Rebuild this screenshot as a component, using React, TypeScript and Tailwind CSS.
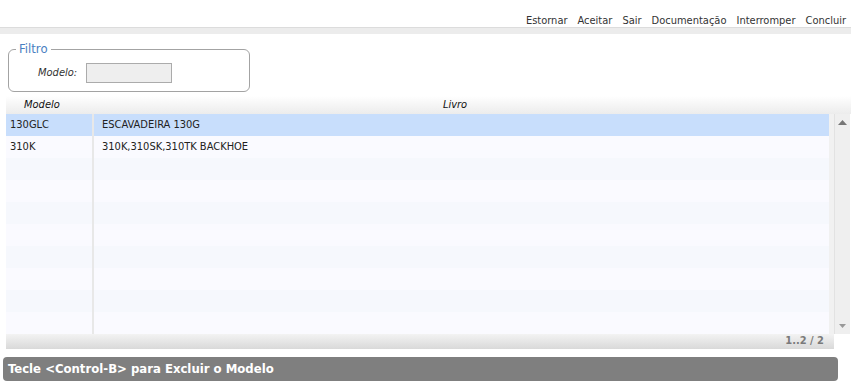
const rows = [
  { modelo: "130GLC", livro: "ESCAVADEIRA 130G" },
  { modelo: "310K", livro: "310K,310SK,310TK BACKHOE" },
];

const font = "font-['Tahoma','DejaVu_Sans_Condensed','DejaVu_Sans',sans-serif]";

export default function App() {
  const filler = Array.from({ length: 10 }, (_, i) => rows[i] ?? null);

  return (
    <div className={`w-[851px] h-[389px] bg-white text-[11px] text-[#222] overflow-hidden ${font}`}>
      {/* toolbar */}
      <div className="h-[27px] flex items-end justify-end gap-[10px] pr-[5px] text-[#333]">
        {["Estornar", "Aceitar", "Sair", "Documentação", "Interromper", "Concluir"].map((a) => (
          <span key={a} className="leading-[13px]">{a}</span>
        ))}
      </div>
      <div className="h-[7px] border-t border-[#dcdcdc] bg-[#ececec]" />

      {/* filtro */}
      <div className="pl-[8px] pt-[8px]">
        <fieldset className="w-[242px] h-[50px] border border-[#a3a3a3] rounded-[6px] pl-[7px]">
          <legend className="px-[3px] text-[13px] text-[#4a7fc2] leading-[14px]">Filtro</legend>
          <div className="flex items-center gap-[9px] pl-[22px] pt-[7px]">
            <span className="italic text-[#333]">Modelo:</span>
            <div className="w-[86px] h-[20px] bg-[#eeeeee] border border-[#ababab]" />
          </div>
        </fieldset>
      </div>

      {/* grid */}
      <div className="ml-[6px] mt-[4px] w-[845px]">
        <div className="h-[18px] flex items-center bg-gradient-to-b from-white to-[#ececec] italic text-[#111]">
          <div className="w-[87px] pl-[18px]">Modelo</div>
          <div className="flex-1 text-center pr-[34px]">Livro</div>
        </div>
        <div className="flex">
          <div className="w-[823px]">
            {filler.map((r, i) => (
              <div
                key={i}
                className={`h-[22px] flex items-center ${
                  i === 0 ? "bg-[#c8defc]" : i % 2 === 1 ? "bg-[#fafaff]" : "bg-[#f6f8fd]"
                }`}
              >
                <div className="w-[86px] pl-[4px] h-full flex items-center">{r?.modelo}</div>
                <div className="w-[2px] h-full bg-[#e8e8e8]" />
                <div className="pl-[8px]">{r?.livro}</div>
              </div>
            ))}
          </div>
          <div className="w-[5px] bg-[#f1f1f1]" />
          <div className="w-[16px] bg-[#efefef] border-l border-[#e2e2e2] flex flex-col justify-between items-center py-[6px]">
            <svg width="9" height="5" viewBox="0 0 9 5"><path d="M4.5 0 L9 5 L0 5 Z" fill="#777" /></svg>
            <svg width="7" height="4" viewBox="0 0 7 4"><path d="M0 0 L7 0 L3.5 4 Z" fill="#999" /></svg>
          </div>
        </div>
        <div className="h-[15px] w-[828px] flex items-center justify-end pr-[10px] bg-gradient-to-b from-[#f3f3f3] to-[#d9d9d9] font-bold text-[#7a7a7a] text-[11px]">
          1..2 / 2
        </div>
      </div>

      {/* status */}
      <div className="ml-[3px] mt-[8px] w-[835px] h-[24px] rounded-[4px] bg-[#7f7f7f] flex items-center pl-[5px] text-white font-bold text-[13px]">
        Tecle &lt;Control-B&gt; para Excluir o Modelo
      </div>
    </div>
  );
}
